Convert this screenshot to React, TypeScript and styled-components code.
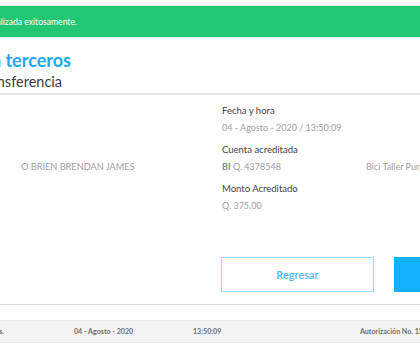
import styled, { createGlobalStyle } from 'styled-components';

const GlobalStyle = createGlobalStyle`
  html, body {
    margin: 0;
    padding: 0;
    background: #ffffff;
    font-family: Lato, 'Open Sans', sans-serif;
    overflow: hidden;
  }
`;

const Page = styled.div`
  width: 420px;
  height: 350px;
  overflow: hidden;
  padding-top: 5px;
  box-sizing: border-box;
`;

// shows only the tail of a line: anything past the left edge is cut off
const ClipLeft = styled.div<{ $end: number }>`
  width: ${(p) => p.$end}px;
  display: flex;
  justify-content: flex-end;
  overflow: hidden;
  white-space: nowrap;
`;

const Banner = styled.div`
  height: 32px;
  background-color: #22c673;
  border-top: 1px solid #d6f3e4;
  box-sizing: border-box;
  display: flex;
  align-items: center;
  color: #ffffff;
  font-size: 8.6px;
`;

const Header = styled.div`
  padding-top: 12px;
  border-bottom: 2px solid #e8e8e8;
`;

const Title = styled.h1`
  margin: 0;
  font-size: 18px;
  line-height: 22px;
  font-weight: 700;
  color: #1ca9f2;
`;

const Subtitle = styled.h2`
  margin: 0;
  font-size: 14.5px;
  line-height: 22px;
  font-weight: 400;
  color: #3d3d3d;
`;

const Details = styled.div`
  display: grid;
  grid-template-columns: 222px 144px 1fr;
  padding-top: 8px;
`;

const Field = styled.div<{ $gap?: number }>`
  grid-column: 2 / 4;
  margin-top: ${(p) => p.$gap ?? 0}px;
`;

const Label = styled.div`
  font-size: 9.5px;
  line-height: 16px;
  color: #444444;
`;

const Value = styled.div`
  font-size: 9px;
  line-height: 16px;
  margin-top: 1px;
  color: #a0a0a0;
  white-space: nowrap;
  b {
    font-weight: 700;
    color: #8c8c8c;
  }
`;

const ValueRow = styled.div`
  display: grid;
  grid-template-columns: 144px 1fr;
`;

const Name = styled.div`
  grid-column: 1;
  padding-left: 21px;
  font-size: 9.2px;
  line-height: 16px;
  color: #a0a0a0;
  white-space: nowrap;
  align-self: end;
`;

const Actions = styled.div`
  display: flex;
  gap: 20px;
  padding-left: 221px;
  margin-top: 43px;
  padding-bottom: 12px;
  border-bottom: 1px solid #dedede;
`;

const Button = styled.button<{ $primary?: boolean }>`
  flex: none;
  width: 153px;
  height: 35px;
  box-sizing: border-box;
  font-family: Lato, sans-serif;
  font-size: 11px;
  font-weight: 600;
  border: 1px solid ${(p) => (p.$primary ? '#13b1fb' : '#9fdcfb')};
  background: ${(p) => (p.$primary ? '#13b1fb' : '#ffffff')};
  color: ${(p) => (p.$primary ? '#ffffff' : '#4db8f5')};
  padding: 0;
`;

const FooterBar = styled.div`
  margin-top: 15px;
  height: 23px;
  box-sizing: border-box;
  background: #f3f3f3;
  border-top: 1px solid #ececec;
  border-bottom: 1px solid #ececec;
  display: grid;
  grid-template-columns: 74px 119px 167px 1fr;
  align-items: center;
  font-size: 7.1px;
  font-weight: 700;
  color: #6e6e6e;
  white-space: nowrap;
`;

const Cell = styled.div`
  overflow: hidden;
`;

export default function App() {
  return (
    <>
      <GlobalStyle />
      <Page>
        <Banner>
          <ClipLeft $end={77}>Transacción realizada exitosamente.</ClipLeft>
        </Banner>
        <Header>
          <Title>
            <ClipLeft $end={71}>Transferencia a terceros</ClipLeft>
          </Title>
          <Subtitle>
            <ClipLeft $end={62}>Detalle de transferencia</ClipLeft>
          </Subtitle>
        </Header>
        <Details>
          <Field>
            <Label>Fecha y hora</Label>
            <Value>04 - Agosto - 2020 / 13:50:09</Value>
          </Field>
          <Name style={{ gridRow: 2 }}>O BRIEN BRENDAN JAMES</Name>
          <Field $gap={6}>
            <Label>Cuenta acreditada</Label>
            <ValueRow>
              <Value>
                <b>BI</b> Q. 4378548
              </Value>
              <Value>Bici Taller Purpura</Value>
            </ValueRow>
          </Field>
          <Field $gap={6}>
            <Label>Monto Acreditado</Label>
            <Value>Q. 375.00</Value>
          </Field>
        </Details>
        <Actions>
          <Button>Regresar</Button>
          <Button $primary>Imprimir</Button>
        </Actions>
        <FooterBar>
          <Cell>
            <ClipLeft $end={4}>Transferencia a terceros.</ClipLeft>
          </Cell>
          <Cell>04 - Agosto - 2020</Cell>
          <Cell>13:50:09</Cell>
          <Cell>Autorización No. 1234567</Cell>
        </FooterBar>
      </Page>
    </>
  );
}
